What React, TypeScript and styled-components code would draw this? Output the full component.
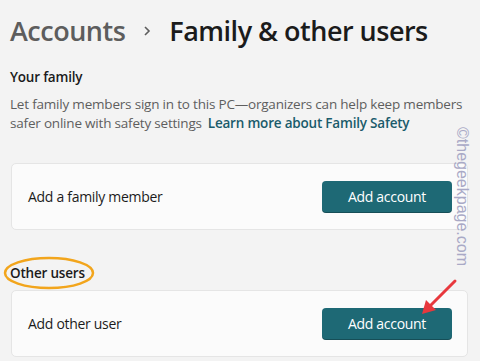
import styled, { createGlobalStyle } from "styled-components";

const Global = createGlobalStyle`
  html, body {
    margin: 0;
    padding: 0;
    background: #f3f3f3;
  }
  body {
    font-family: "Open Sans", "Noto Sans", sans-serif;
    color: #1b1b1b;
    overflow: hidden;
  }
`;

const Page = styled.div`
  position: relative;
  width: 480px;
  height: 361px;
  padding: 12px 12px 0 10px;
  box-sizing: border-box;
`;

const Breadcrumb = styled.h1`
  display: flex;
  align-items: center;
  margin: 0;
  font-size: 27px;
  font-weight: 600;
  line-height: 38px;
  letter-spacing: -0.5px;
`;

const Crumb = styled.span<{ current?: boolean }>`
  color: ${p => (p.current ? "#1b1b1b" : "#5d5d5d")};
`;

const Chevron = styled.span`
  width: 44px;
  display: flex;
  justify-content: center;
`;

const SectionTitle = styled.div<{ top: number }>`
  position: relative;
  margin-top: ${p => p.top}px;
  font-size: 13.5px;
  font-weight: 600;
  line-height: 20px;
  letter-spacing: -0.2px;
`;

const Description = styled.p`
  margin: 8px 0 0;
  font-size: 13.5px;
  line-height: 19px;
  letter-spacing: -0.2px;
  color: #5e5e5e;
  white-space: nowrap;
`;

const Link = styled.a`
  color: #1a5b6b;
  font-weight: 600;
  text-decoration: none;
  margin-left: 6px;
`;

const Card = styled.div<{ top: number }>`
  margin-top: ${p => p.top}px;
  margin-left: 1px;
  height: 67px;
  box-sizing: border-box;
  display: flex;
  align-items: center;
  justify-content: space-between;
  padding: 0 15px 0 16px;
  background: #fbfbfb;
  border: 1px solid #e5e5e5;
  border-radius: 5px;
  font-size: 14px;
  letter-spacing: -0.3px;
  color: #1b1b1b;
`;

const Button = styled.button`
  width: 130px;
  height: 32px;
  border: none;
  border-radius: 4px;
  background: #1e6975;
  color: #ffffff;
  font-family: inherit;
  font-size: 14px;
  letter-spacing: -0.3px;
  box-shadow: inset 0 -1px 0 rgba(0, 0, 0, 0.25);
`;

const Ellipse = styled.svg`
  position: absolute;
  left: -7px;
  top: -7px;
  pointer-events: none;
`;

const Arrow = styled.svg`
  position: absolute;
  left: 416px;
  top: 276px;
`;

const Watermark = styled.div`
  position: absolute;
  left: 456px;
  top: 127px;
  transform-origin: 0 0;
  transform: translateX(15px) rotate(90deg);
  white-space: nowrap;
  font-family: "Liberation Sans", sans-serif;
  font-size: 16px;
  color: #a9a9c6;
`;

export default function App() {
  return (
    <Page>
      <Global />
      <Breadcrumb>
        <Crumb>Accounts</Crumb>
        <Chevron>
          <svg width="10" height="12" viewBox="0 0 10 12">
            <path d="M3 2 L7 6 L3 10" fill="none" stroke="#5d5d5d" strokeWidth="1.6" />
          </svg>
        </Chevron>
        <Crumb current>Family &amp; other users</Crumb>
      </Breadcrumb>

      <SectionTitle top={17}>Your family</SectionTitle>
      <Description>
        Let family members sign in to this PC—organizers can help keep members
        <br />
        safer online with safety settings
        <Link href="#">Learn more about Family Safety</Link>
      </Description>

      <Card top={30}>
        <span>Add a family member</span>
        <Button>Add account</Button>
      </Card>

      <SectionTitle top={33}>
        Other users
        <Ellipse width="92" height="34" viewBox="0 0 92 34">
          <ellipse cx="46" cy="17" rx="44" ry="15" fill="none" stroke="#f2a51c" strokeWidth="2.5" />
        </Ellipse>
      </SectionTitle>

      <Card top={7}>
        <span>Add other user</span>
        <Button>Add account</Button>
      </Card>

      <Arrow width="44" height="42" viewBox="0 0 44 42">
        <line x1="39" y1="5" x2="14" y2="30" stroke="#e8383d" strokeWidth="3" strokeLinecap="round" />
        <polygon points="6,38 10,24 20,34" fill="#e8383d" />
      </Arrow>

      <Watermark>©thegeekpage.com</Watermark>
    </Page>
  );
}
